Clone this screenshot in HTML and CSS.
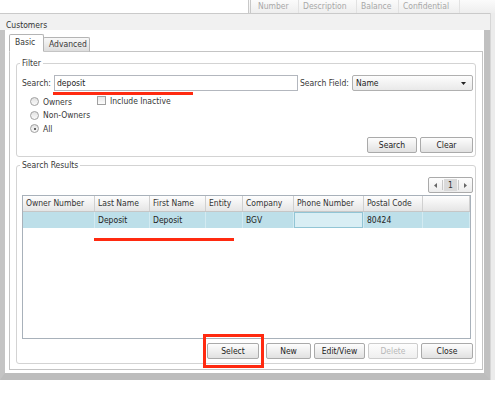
FILE: index.html
```html
<!DOCTYPE html>
<html lang="en">
<head>
    <meta charset="UTF-8">
    <meta name="viewport" content="width=device-width, initial-scale=1.0">
    <title>Customers</title>
    <link rel="stylesheet" href="styles.css">
</head>
<body>

    <!-- accounts grid header sitting behind the dialog -->
    <div class="back-header">
        <div class="back-cols">
            <span class="bc-number">Number</span>
            <span class="bc-desc">Description</span>
            <span class="bc-balance">Balance</span>
            <span class="bc-conf">Confidential</span>
        </div>
    </div>

    <div class="stage">
        <div class="dialog">
            <div class="dialog-title">Customers</div>
            <div class="dialog-body">

                <div class="tabs">
                    <div class="tab active">Basic</div>
                    <div class="tab">Advanced</div>
                </div>

                <div class="tab-panel">
                    <fieldset class="group">
                        <legend>Filter</legend>
                        <div class="search-row">
                            <label class="search-label">Search:</label>
                            <div class="text-input">deposit</div>
                            <label class="field-label">Search Field:</label>
                            <div class="select">
                                <span>Name</span>
                                <svg width="5" height="3" viewBox="0 0 5 3"><path d="M0 0h5L2.5 3z" fill="#222"/></svg>
                            </div>
                        </div>
                        <div class="options">
                            <div class="radios">
                                <div class="radio-row"><span class="radio"></span>Owners</div>
                                <div class="radio-row"><span class="radio"></span>Non-Owners</div>
                                <div class="radio-row"><span class="radio checked"></span>All</div>
                            </div>
                            <div class="check-row"><span class="checkbox"></span>Include Inactive</div>
                        </div>
                        <div class="button-row">
                            <button class="btn btn-search">Search</button>
                            <button class="btn btn-clear">Clear</button>
                        </div>
                    </fieldset>

                    <fieldset class="group results">
                        <legend>Search Results</legend>
                        <div class="pager">
                            <span class="pg-arrow"><svg width="3" height="5" viewBox="0 0 3 5"><path d="M3 0v5L0 2.5z" fill="#666"/></svg></span>
                            <span class="pg-sep"></span>
                            <span class="pg-num">1</span>
                            <span class="pg-sep"></span>
                            <span class="pg-arrow"><svg width="3" height="5" viewBox="0 0 3 5"><path d="M0 0v5L3 2.5z" fill="#666"/></svg></span>
                        </div>
                        <div class="grid">
                            <div class="grid-row grid-head">
                                <div class="cell">Owner Number</div>
                                <div class="cell">Last Name</div>
                                <div class="cell">First Name</div>
                                <div class="cell">Entity</div>
                                <div class="cell">Company</div>
                                <div class="cell">Phone Number</div>
                                <div class="cell">Postal Code</div>
                                <div class="cell"></div>
                            </div>
                            <div class="grid-row selected">
                                <div class="cell"></div>
                                <div class="cell">Deposit</div>
                                <div class="cell">Deposit</div>
                                <div class="cell"></div>
                                <div class="cell">BGV</div>
                                <div class="cell focused"></div>
                                <div class="cell">80424</div>
                                <div class="cell"></div>
                            </div>
                        </div>
                        <div class="button-row bottom-buttons">
                            <button class="btn btn-select">Select</button>
                            <button class="btn btn-new">New</button>
                            <button class="btn btn-edit">Edit/View</button>
                            <button class="btn btn-delete" disabled>Delete</button>
                            <button class="btn btn-close">Close</button>
                        </div>
                    </fieldset>
                </div>

            </div>
        </div>
        <div class="back-edge"></div>
    </div>

    <!-- red markup on top of the form -->
    <div class="mark-line mark-search"></div>
    <div class="mark-line mark-row"></div>
    <div class="mark-box"></div>

</body>
</html>
```

FILE: styles.css
```css
* {
    box-sizing: border-box;
}
body {
    margin: 0;
    width: 495px;
    height: 400px;
    overflow: hidden;
    position: relative;
    background: #fff;
    font-family: "DejaVu Sans Condensed", "DejaVu Sans", sans-serif;
    font-stretch: condensed;
    font-size: 8.5px;
    color: #383838;
}

/* grid header behind the dialog */
.back-header {
    height: 13px;
    display: flex;
    padding-left: 248px;
}
.back-cols {
    flex: 1;
    display: flex;
    border-left: 3px double #c8c8c8;
    background: linear-gradient(#fbfbfb, #eeeeee);
    color: #a8a8a8;
    line-height: 13px;
}
.back-cols span {
    border-right: 1px solid #e2e2e2;
    padding-left: 4px;
    white-space: nowrap;
}
.bc-number { width: 48px; padding-left: 7px !important; }
.bc-desc { width: 58px; }
.bc-balance { width: 42px; }
.bc-conf { width: 61px; }

.stage {
    display: flex;
}
.back-edge {
    flex: 1;
    background: #ececec;
    border-left: 1px solid #d6d6d6;
}

/* dialog window */
.dialog {
    width: 490px;
}
.dialog-title {
    height: 17px;
    border-top: 1px solid #cacaca;
    background: #f1f1f1;
    padding: 6px 0 0 6px;
    line-height: 10px;
    color: #333;
}
.dialog-body {
    background: #fff;
    border-left: 5px solid #c4c4c4;
    border-right: 6px solid #c0c0c0;
    border-bottom: 7px solid #bdbdbd;
    padding: 4px 1px 3px 4px;
}

/* tabs */
.tabs {
    display: flex;
    align-items: flex-end;
    height: 18px;
    margin-bottom: -1px;
    position: relative;
}
.tab {
    height: 15px;
    width: 47px;
    margin-left: -1px;
    padding-left: 5px;
    border: 1px solid #b4b4b4;
    border-bottom-color: #c4c4c4;
    border-radius: 2px 2px 0 0;
    background: linear-gradient(#f8f8f8, #dddddd);
    line-height: 13px;
}
.tab.active {
    height: 18px;
    width: 35px;
    margin-left: 0;
    background: #fff;
    border-bottom-color: #fff;
    line-height: 15px;
    position: relative;
    z-index: 1;
}
.tab-panel {
    border: 1px solid #c4c4c4;
    padding: 6px 6px 5px 6px;
}

/* group boxes */
.group {
    margin: 0;
    min-width: 0;
    border: 1px solid #d3d3d3;
    border-radius: 3px;
    padding: 6px 2px 3px 5px;
}
.group legend {
    padding: 0 2px;
    margin-left: -2px;
    line-height: 11px;
}
.group.results {
    margin-top: 3px;
    padding-bottom: 4px;
}

.search-row {
    display: flex;
    align-items: center;
    height: 16px;
}
.search-label {
    width: 32px;
}
.text-input {
    width: 244px;
    height: 16px;
    border: 1px solid #b3b7be;
    padding-left: 2px;
    line-height: 14px;
    color: #222;
}
.field-label {
    width: 52px;
    margin-left: 2px;
    white-space: nowrap;
}
.select {
    width: 121px;
    height: 16px;
    display: flex;
    align-items: center;
    justify-content: space-between;
    padding: 0 6px 0 3px;
    border: 1px solid #b0b0b0;
    border-radius: 2px;
    background: linear-gradient(#fdfdfd, #e9e9e9);
    color: #222;
}

.options {
    display: flex;
    height: 46px;
}
.radios {
    width: 75px;
    padding: 4px 0 0 8px;
}
.radio-row {
    display: flex;
    align-items: center;
    gap: 4px;
    height: 13.5px;
}
.radio {
    width: 9px;
    height: 9px;
    border-radius: 50%;
    border: 1px solid #a0a0a0;
    background: linear-gradient(#e2e2e2, #fafafa);
    position: relative;
}
.radio.checked::after {
    content: "";
    position: absolute;
    left: 2.5px;
    top: 2.5px;
    width: 2px;
    height: 2px;
    border-radius: 50%;
    background: #333;
}
.check-row {
    display: flex;
    align-items: center;
    gap: 4px;
    height: 13px;
    margin-top: 3px;
}
.checkbox {
    width: 9px;
    height: 9px;
    border: 1px solid #a0a0a0;
    background: linear-gradient(#e6e6e6, #fdfdfd);
}

/* buttons */
.button-row {
    display: flex;
    justify-content: flex-end;
    gap: 3px;
}
.btn {
    height: 16px;
    padding: 0;
    border: 1px solid #aaaaaa;
    border-radius: 2px;
    background: linear-gradient(#fdfdfd, #e1e1e1);
    font: inherit;
    line-height: 14px;
    color: #222;
    text-align: center;
}
.btn:disabled {
    color: #b8b8b8;
    border-color: #cdcdcd;
    background: linear-gradient(#fdfdfd, #efefef);
}
.btn-search { width: 50px; }
.btn-clear { width: 53px; }
.bottom-buttons {
    margin-top: 4px;
}
.btn-select { width: 52px; margin-right: 4px; }
.btn-new { width: 45px; }
.btn-edit { width: 51px; }
.btn-delete { width: 50px; }
.btn-close { width: 52px; }

/* pager */
.pager {
    width: 45px;
    height: 16px;
    margin-left: auto;
    display: flex;
    align-items: center;
    border: 1px solid #aaaaaa;
    border-radius: 2px;
    background: linear-gradient(#fdfdfd, #ececec);
}
.pg-arrow {
    width: 13px;
    display: flex;
    justify-content: center;
}
.pg-sep {
    width: 1px;
    height: 10px;
    background: #c8c8c8;
}
.pg-num {
    width: 13px;
    height: 12px;
    margin: 0 1px;
    background: #dadada;
    text-align: center;
    line-height: 12px;
    color: #333;
}

/* results grid */
.grid {
    height: 144px;
    margin: 2px 2px 0 0;
    border: 1px solid #a8b1ba;
    background: #fff;
}
.grid-row {
    display: grid;
    grid-template-columns: 72px 55px 56px 37px 51px 70px 59px 1fr;
    height: 16px;
}
.cell {
    padding-left: 3px;
    line-height: 15px;
    white-space: nowrap;
    overflow: hidden;
}
.grid-head {
    background: linear-gradient(#fefefe, #e5e5e5);
    border-bottom: 1px solid #c6c6c6;
}
.grid-head .cell {
    border-right: 1px solid #d0d0d0;
    color: #333;
}
.selected {
    background: #bddfe9;
    color: #222;
}
.selected .cell {
    border-right: 1px solid #d3eaf1;
    line-height: 16px;
}
.selected .cell.focused {
    background: #d9eef4;
    box-shadow: inset 0 0 0 1px #92c5d5;
}

/* red markup */
.mark-line {
    position: absolute;
    height: 3px;
    background: #ff2a10;
}
.mark-search {
    left: 53px;
    top: 92px;
    width: 140px;
}
.mark-row {
    left: 94px;
    top: 238px;
    width: 140px;
}
.mark-box {
    position: absolute;
    left: 203px;
    top: 334px;
    width: 61px;
    height: 34px;
    border: 3px solid #ff2a10;
}
```
